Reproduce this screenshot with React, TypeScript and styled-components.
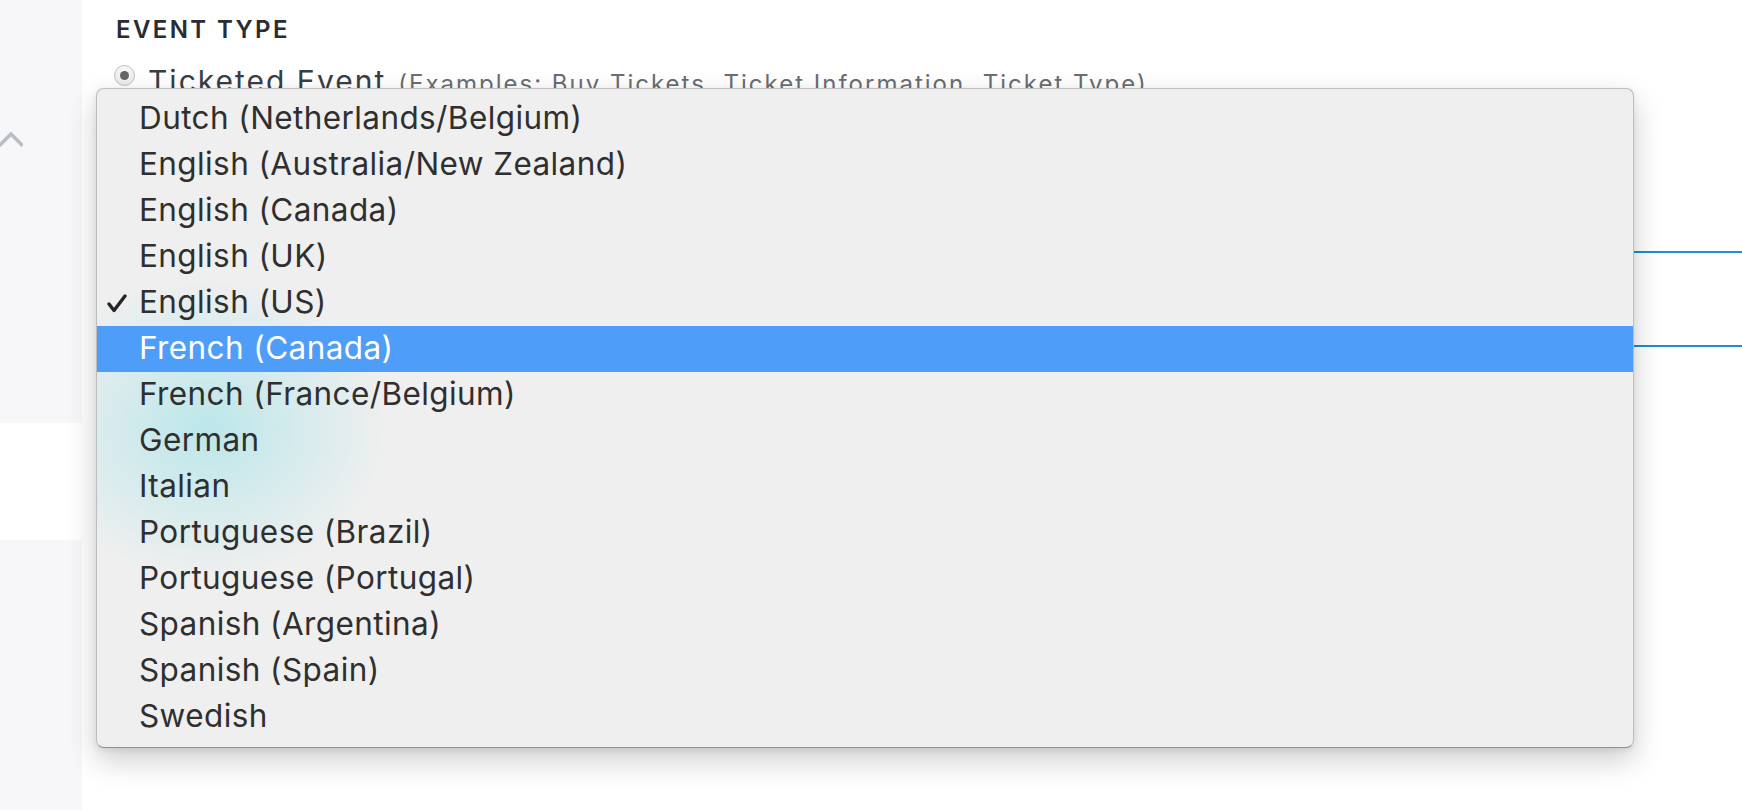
import React from "react";
import styled, { createGlobalStyle } from "styled-components";

/* ─── Global ─── */

const GlobalStyle = createGlobalStyle`
  html, body {
    margin: 0;
    padding: 0;
    background: #ffffff;
    font-family: Inter, "Liberation Sans", sans-serif;
    -webkit-font-smoothing: antialiased;
  }
`;

/* ─── Page layout ─── */

const Page = styled.div`
  position: relative;
  display: flex;
  width: 100%;
  height: 810px;
  overflow: hidden;
`;

const Sidebar = styled.aside`
  width: 82px;
  flex-shrink: 0;
  background: #f7f7f9;
  display: flex;
  flex-direction: column;
  padding-top: 131px;
  box-sizing: border-box;
`;

const Collapse = styled.div`
  height: 16px;
  margin-left: -1px;
  display: flex;
  align-items: flex-start;
`;

const ActiveSlot = styled.div`
  margin-top: 276px;
  height: 117px;
  background: #ffffff;
`;

const Main = styled.main`
  flex: 1;
  padding: 15px 0 0 34px;
  display: flex;
  flex-direction: column;
`;

const SectionTitle = styled.h2`
  margin: 0;
  font-size: 24px;
  line-height: 30px;
  font-weight: 600;
  letter-spacing: 2.4px;
  color: #2a2c32;
`;

const OptionRow = styled.label`
  margin-top: 18px;
  height: 36px;
  display: flex;
  align-items: baseline;
  gap: 12px;
`;

const Radio = styled.span`
  align-self: flex-start;
  margin-top: 2px;
  margin-left: -2px;
  margin-right: 1px;
  width: 21px;
  height: 21px;
  box-sizing: border-box;
  border-radius: 50%;
  border: 1px solid #bdbdbd;
  background: radial-gradient(circle at 50% 40%, #fdfdfd, #e2e2e2);
  box-shadow: inset 0 1px 1px rgba(255, 255, 255, 0.8);
  display: flex;
  align-items: center;
  justify-content: center;

  &::after {
    content: "";
    width: 9px;
    height: 9px;
    border-radius: 50%;
    background: #666666;
  }
`;

const OptionLabel = styled.span`
  font-size: 30px;
  line-height: 36px;
  letter-spacing: 2px;
  color: #3a3d44;
`;

const OptionHint = styled.span`
  font-size: 24px;
  letter-spacing: 2px;
  color: #6a6d73;
`;

const Field = styled.div<{ $height: number }>`
  height: ${({ $height }) => $height}px;
  border-bottom: 2px solid #1b8fd1;
`;

/* ─── Popup menu ─── */

const Menu = styled.ul`
  position: absolute;
  left: 96px;
  top: 88px;
  width: 1536px;
  margin: 0;
  padding: 7px 0;
  list-style: none;
  border: 1px solid #bebebe;
  border-bottom-color: #8f8f8f;
  border-radius: 8px;
  background: radial-gradient(
      ellipse 180px 150px at 110px 340px,
      rgba(170, 228, 233, 0.75),
      rgba(170, 228, 233, 0) 100%
    ),
    #efefef;
  box-shadow: 0 12px 30px rgba(0, 0, 0, 0.2), 0 2px 6px rgba(0, 0, 0, 0.08);
  z-index: 5;
`;

const Item = styled.li<{ $active?: boolean }>`
  height: 46px;
  display: flex;
  background: ${({ $active }) => ($active ? "#4e9df8" : "transparent")};
  color: ${({ $active }) => ($active ? "#ffffff" : "#2f2f2f")};
`;

const CheckSlot = styled.span`
  width: 42px;
  padding-left: 10px;
  box-sizing: border-box;
  display: flex;
  align-items: center;
  padding-top: 1px;
`;

const ItemLabel = styled.span`
  font-size: 31.5px;
  line-height: 43px;
  letter-spacing: 0.4px;
`;

const Chevron = () => (
  <svg width="24" height="16" viewBox="0 0 24 16" fill="none">
    <path
      d="M1.5 13.5 L12 3 L22.5 13.5"
      stroke="#b9bdc6"
      strokeWidth="3.6"
      strokeLinecap="square"
    />
  </svg>
);

const Check = () => (
  <svg width="20" height="19" viewBox="0 0 20 19" fill="none">
    <path
      d="M2 10 L7 16.5 L18 2"
      stroke="#262626"
      strokeWidth="3.4"
      strokeLinecap="round"
      strokeLinejoin="round"
    />
  </svg>
);

const languages = [
  "Dutch (Netherlands/Belgium)",
  "English (Australia/New Zealand)",
  "English (Canada)",
  "English (UK)",
  "English (US)",
  "French (Canada)",
  "French (France/Belgium)",
  "German",
  "Italian",
  "Portuguese (Brazil)",
  "Portuguese (Portugal)",
  "Spanish (Argentina)",
  "Spanish (Spain)",
  "Swedish",
];

const selected = "English (US)";
const hovered = "French (Canada)";

export default function App() {
  return (
    <>
      <GlobalStyle />
      <Page>
        <Sidebar>
          <Collapse>
            <Chevron />
          </Collapse>
          <ActiveSlot />
        </Sidebar>

        <Main>
          <SectionTitle>EVENT TYPE</SectionTitle>
          <OptionRow>
            <Radio />
            <OptionLabel>Ticketed Event</OptionLabel>
            <OptionHint>
              (Examples: Buy Tickets, Ticket Information, Ticket Type)
            </OptionHint>
          </OptionRow>
          <Field $height={152} />
          <Field $height={92} />
        </Main>

        <Menu role="listbox">
          {languages.map((lang) => (
            <Item
              key={lang}
              role="option"
              aria-selected={lang === selected}
              $active={lang === hovered}
            >
              <CheckSlot>{lang === selected && <Check />}</CheckSlot>
              <ItemLabel>{lang}</ItemLabel>
            </Item>
          ))}
        </Menu>
      </Page>
    </>
  );
}
